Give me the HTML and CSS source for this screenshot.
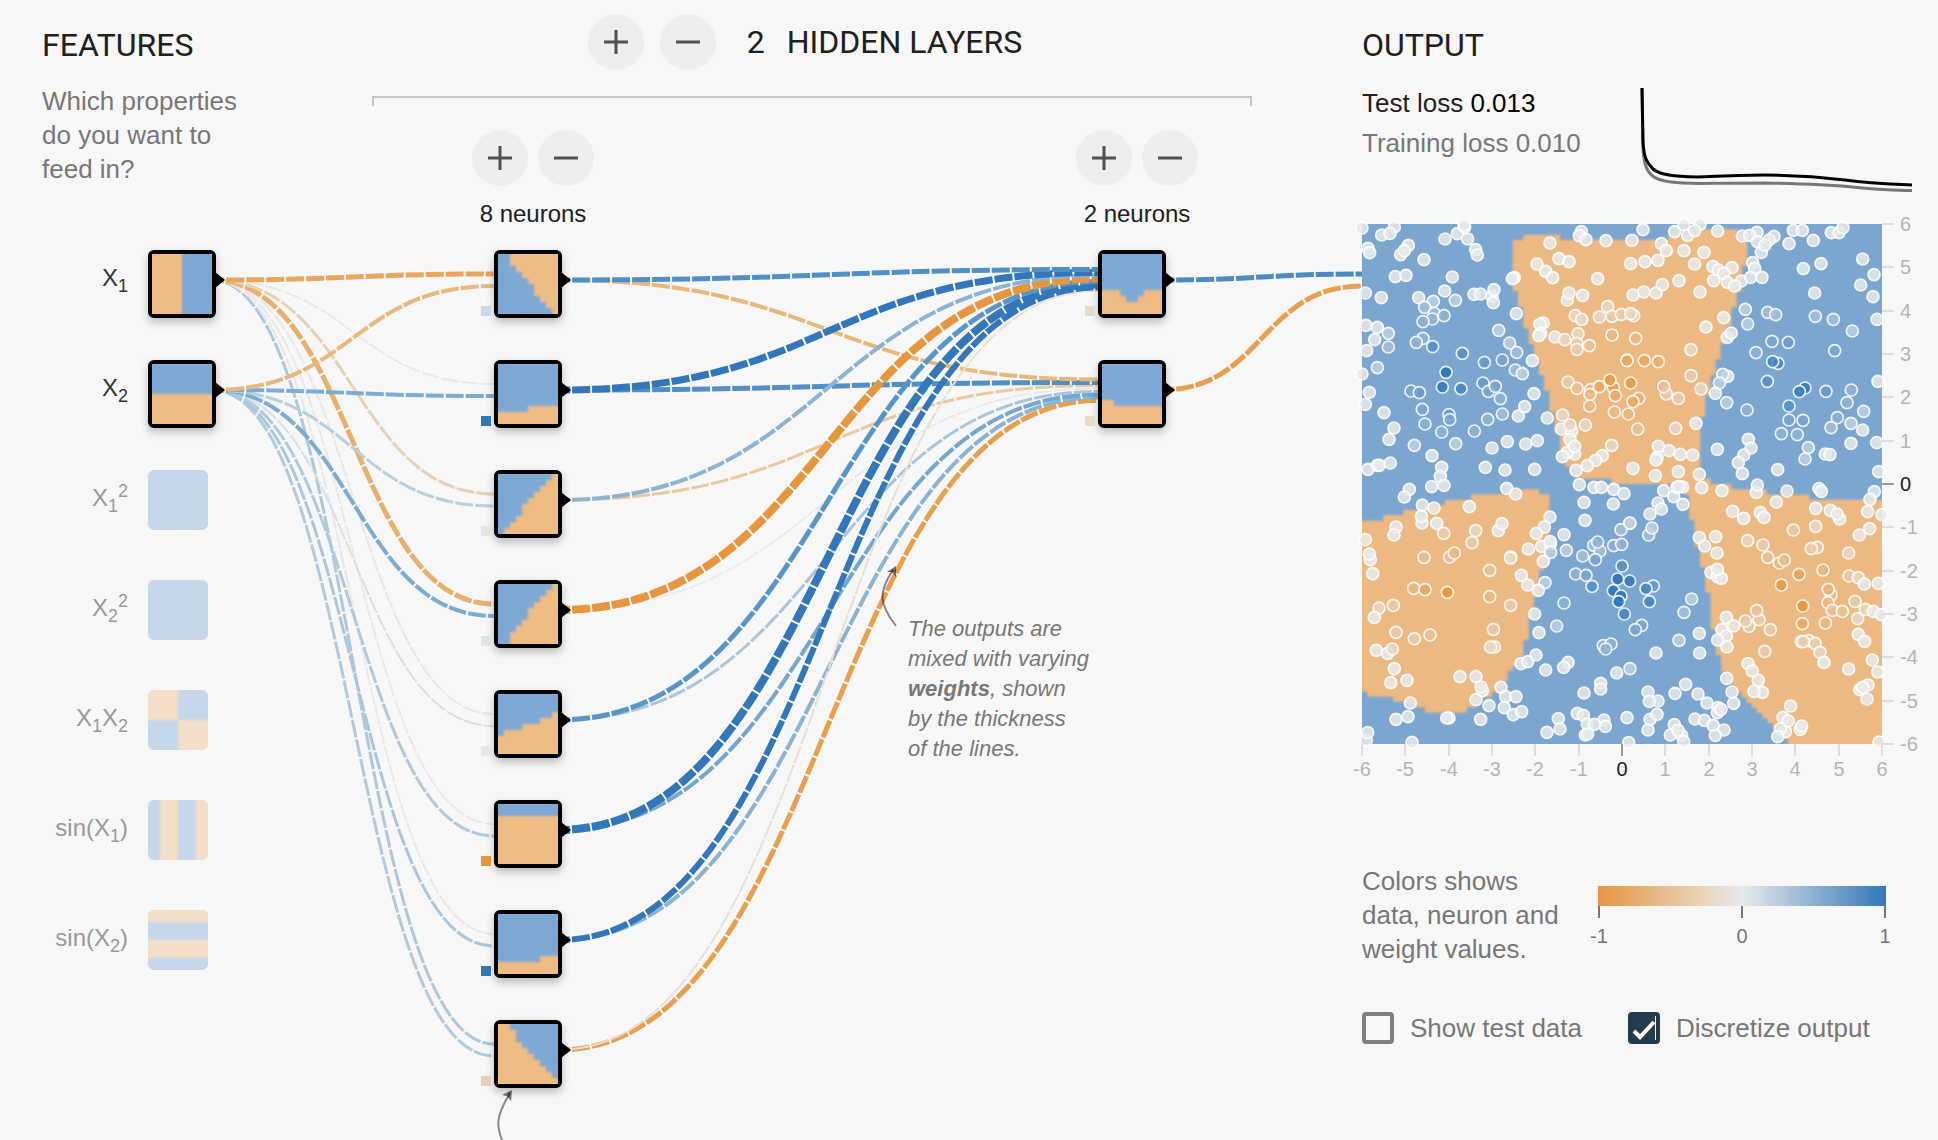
FILE: index.html
```html
<!DOCTYPE html>
<html lang="en">
<head>
<meta charset="utf-8">
<meta name="viewport" content="width=device-width, initial-scale=1">
<title>Neural network playground</title>
<link rel="stylesheet" href="styles.css">
</head>
<body>
<main class="playground">
  <svg class="links" id="links" aria-hidden="true"></svg>

  <section class="features">
    <h2 class="title">FEATURES</h2>
    <p class="copy">Which properties<br>do you want to<br>feed in?</p>
    <ul class="feature-list">
      <li class="feature active"><span class="feature-label">X<sub>1</sub></span><div class="node" id="x1" data-map="x1"></div></li>
      <li class="feature active"><span class="feature-label">X<sub>2</sub></span><div class="node" id="x2" data-map="x2"></div></li>
      <li class="feature"><span class="feature-label">X<sub>1</sub><sup>2</sup></span><div class="swatch" data-map="plain"></div></li>
      <li class="feature"><span class="feature-label">X<sub>2</sub><sup>2</sup></span><div class="swatch" data-map="plain"></div></li>
      <li class="feature"><span class="feature-label">X<sub>1</sub>X<sub>2</sub></span><div class="swatch" data-map="product"></div></li>
      <li class="feature"><span class="feature-label">sin(X<sub>1</sub>)</span><div class="swatch" data-map="sin1"></div></li>
      <li class="feature"><span class="feature-label">sin(X<sub>2</sub>)</span><div class="swatch" data-map="sin2"></div></li>
    </ul>
  </section>

  <section class="network">
    <header class="network-head">
      <div class="head-buttons">
        <button class="round" type="button" aria-label="Add layer"><svg viewBox="0 0 24 24"><path d="M12 0v24M0 12h24"/></svg></button>
        <button class="round" type="button" aria-label="Remove layer"><svg viewBox="0 0 24 24"><path d="M0 12h24"/></svg></button>
      </div>
      <span class="title count">2</span>
      <h2 class="title">HIDDEN LAYERS</h2>
    </header>
    <div class="bracket"></div>
    <div class="layers">
      <div class="layer">
        <div class="layer-buttons">
          <button class="round" type="button" aria-label="Add neuron"><svg viewBox="0 0 24 24"><path d="M12 0v24M0 12h24"/></svg></button>
          <button class="round" type="button" aria-label="Remove neuron"><svg viewBox="0 0 24 24"><path d="M0 12h24"/></svg></button>
        </div>
        <p class="layer-label">8 neurons</p>
        <div class="nodes">
          <div class="node" id="n1" data-map="n1"><i class="bias" style="background:#cbd9e5"></i></div>
          <div class="node" id="n2" data-map="n2"><i class="bias" style="background:#3277ba"></i></div>
          <div class="node" id="n3" data-map="n3"><i class="bias" style="background:#e8e5df"></i></div>
          <div class="node" id="n4" data-map="n4"><i class="bias" style="background:#dce4e8"></i></div>
          <div class="node" id="n5" data-map="n5"><i class="bias" style="background:#e4e8ea"></i></div>
          <div class="node" id="n6" data-map="n6"><i class="bias" style="background:#e8963e"></i></div>
          <div class="node" id="n7" data-map="n7"><i class="bias" style="background:#3277ba"></i></div>
          <div class="node" id="n8" data-map="n8"><i class="bias" style="background:#e8cfb2"></i></div>
        </div>
      </div>
      <div class="layer">
        <div class="layer-buttons">
          <button class="round" type="button" aria-label="Add neuron"><svg viewBox="0 0 24 24"><path d="M12 0v24M0 12h24"/></svg></button>
          <button class="round" type="button" aria-label="Remove neuron"><svg viewBox="0 0 24 24"><path d="M0 12h24"/></svg></button>
        </div>
        <p class="layer-label">2 neurons</p>
        <div class="nodes">
          <div class="node" id="m1" data-map="m1"><i class="bias" style="background:#e8dac8"></i></div>
          <div class="node" id="m2" data-map="m2"><i class="bias" style="background:#e8dac4"></i></div>
        </div>
      </div>
    </div>
    <p class="callout" id="callout">The outputs are<br>mixed with varying<br><b>weights</b>, shown<br>by the thickness<br>of the lines.</p>
  </section>

  <section class="output">
    <h2 class="title">OUTPUT</h2>
    <div class="metrics">
      <div class="losses">
        <p class="loss">Test loss <span class="loss-value">0.013</span></p>
        <p class="loss training">Training loss <span>0.010</span></p>
      </div>
      <svg class="linechart" viewBox="0 0 272 108" role="img" aria-label="Loss over time">
        <path stroke="#777" d="M2 0L3 60C4 78 7 84 14 89C22 94 36 95 60 95.500C90 95 110 95 125 95C170 96 190 97 212 99C240 102 250 102 272 102.500"/>
        <path stroke="#000" d="M2 0L3 54C4 70 7 75 13 81C20 87 34 88.500 57 89C85 88 105 87 125 87C160 87 185 89.500 205 92C235 96 250 96 272 97"/>
      </svg>
    </div>
    <svg class="heatmap" id="heatmap" viewBox="0 0 550 560" role="img" aria-label="Network output"></svg>
    <div class="legend">
      <p class="copy">Colors shows<br>data, neuron and<br>weight values.</p>
      <div class="scale">
        <div class="gradient"></div>
        <div class="scale-ticks">
          <span class="scale-tick">-1</span><span class="scale-tick">0</span><span class="scale-tick">1</span>
        </div>
      </div>
    </div>
    <div class="options">
      <label class="option"><span class="check"><input type="checkbox"></span>Show test data</label>
      <label class="option"><span class="check"><input type="checkbox" checked><svg viewBox="0 0 32 32"><path d="M6 19l6 6L26 10" stroke-width="4"/><path d="M27.500 4v24" stroke-width="1"/></svg></span>Discretize output</label>
    </div>
  </section>
</main>
<script src="script.js"></script>
</body>
</html>
```
FILE: styles.css
```css
* { box-sizing: border-box; }

body {
  margin: 0;
  background: #f7f7f7;
  color: #777;
  font-family: "Liberation Sans", Arial, Helvetica, sans-serif;
  font-size: 26px;
  line-height: 34px;
}

h2, p, ul { margin: 0; padding: 0; }

.playground {
  position: relative;
  display: grid;
  grid-template-columns: 372px minmax(600px, 1fr) 576px;
  min-height: 100vh;
  overflow: hidden;
}

.links {
  position: absolute;
  inset: 0;
  width: 100%;
  height: 100%;
  pointer-events: none;
  fill: none;
}

.title {
  color: #202020;
  font-family: Roboto, sans-serif;
  font-size: 32px;
  font-weight: 400;
  line-height: 40px;
}

/* Features */
.features { padding: 25px 0 0 42px; }
.features .copy { margin-top: 19px; }

.feature-list {
  display: grid;
  gap: 42px;
  margin-top: 64px;
  list-style: none;
}

.feature {
  display: grid;
  grid-template-columns: 86px 68px;
  gap: 20px;
  height: 68px;
}

.feature-label {
  color: #999;
  font-size: 24px;
  line-height: 56px;
  text-align: right;
  white-space: nowrap;
}

.feature.active .feature-label { color: #333; }

.feature-label sub, .feature-label sup {
  font-size: 18px;
  line-height: 0;
}

.swatch {
  width: 60px;
  height: 60px;
  border-radius: 6px;
  overflow: hidden;
  opacity: .4;
}

.node {
  position: relative;
  width: 68px;
  height: 68px;
  border: 4px solid #000;
  border-radius: 6px;
  background: #000;
  box-shadow: 0 4px 8px rgba(0, 0, 0, .25);
}

.node svg, .swatch svg { display: block; width: 60px; height: 60px; }

.node::after {
  content: "";
  position: absolute;
  left: 63px;
  top: 18px;
  border: 8px solid transparent;
  border-left: 10px solid #000;
  border-right: 0;
}

.bias {
  position: absolute;
  left: -17px;
  top: 52px;
  width: 10px;
  height: 10px;
}

/* Hidden layers */
.network {
  position: relative;
  margin-right: 110px;
  padding-top: 14px;
}

.network-head {
  display: flex;
  align-items: center;
  justify-content: center;
  padding-right: 14px;
}

.head-buttons { display: flex; gap: 16px; margin-right: 31px; }
.count { margin-right: 22px; }

.round {
  display: grid;
  place-items: center;
  width: 56px;
  height: 56px;
  padding: 0;
  border: 0;
  border-radius: 50%;
  background: #eee;
}

.round svg {
  width: 24px;
  height: 24px;
  fill: none;
  stroke: #505050;
  stroke-width: 3;
}

.bracket {
  height: 10px;
  margin-top: 26px;
  border: 2px solid #c6c6c6;
  border-bottom: 0;
}

.layers {
  display: flex;
  justify-content: space-between;
  margin-top: 24px;
  padding: 0 54px 0 100px;
}

.layer { width: 122px; }
.layer-buttons { display: flex; justify-content: space-between; }

.layer-label {
  margin-top: 14px;
  color: #202020;
  font-size: 24px;
  line-height: 28px;
  text-align: center;
}

.nodes {
  display: grid;
  gap: 42px;
  margin: 22px 0 0 22px;
}

.callout {
  position: absolute;
  left: 536px;
  top: 614px;
  font-size: 22px;
  font-style: italic;
  line-height: 30px;
  white-space: nowrap;
}

/* Output */
.output { padding: 25px 26px 0 0; position: relative; }

.metrics {
  display: flex;
  justify-content: space-between;
  margin-top: 18px;
}

.loss { color: #202020; line-height: 40px; white-space: nowrap; }
.loss-value { color: #000; }
.loss.training { color: #777; }

.linechart {
  width: 272px;
  height: 108px;
  margin-top: 5px;
  fill: none;
  stroke-width: 3;
}

.heatmap {
  display: block;
  width: 100%;
  margin-top: 28px;
  overflow: visible;
}

.heatmap text {
  fill: #b4b4b4;
  font-size: 20px;
}

.heatmap .tick { stroke: #ddd; stroke-width: 2; }
.heatmap .tick.zero { stroke: #999; }
.heatmap text.zero { fill: #222; }

.legend {
  display: grid;
  grid-template-columns: 236px 288px;
  margin-top: 80px;
}

.legend .copy { white-space: nowrap; }
.scale { padding-top: 22px; }

.gradient {
  height: 20px;
  background: linear-gradient(90deg, #e8963e, #e8eaeb 50%, #3277ba);
}

.scale-ticks {
  display: flex;
  justify-content: space-between;
  margin: 0 -19px;
}

.scale-tick {
  width: 40px;
  font-size: 20px;
  line-height: 24px;
  text-align: center;
}

.scale-tick::before {
  content: "";
  display: block;
  width: 2px;
  height: 12px;
  margin: 0 auto 6px;
  background: #777;
}

.options {
  display: flex;
  gap: 46px;
  margin-top: 46px;
}

.option {
  display: flex;
  align-items: center;
  gap: 16px;
  line-height: 32px;
  white-space: nowrap;
}

.check { display: grid; width: 32px; height: 32px; }
.check > * { grid-area: 1 / 1; }

.check input {
  appearance: none;
  width: 32px;
  height: 32px;
  margin: 0;
  border: 4px solid #7f7f7f;
  border-radius: 4px;
}

.check input:checked { border-color: #233b4b; background: #233b4b; }

.check svg {
  width: 32px;
  height: 32px;
  fill: none;
  stroke: #fff;
  pointer-events: none;
}
```
FILE: script.js
```js
const NS = 'http://www.w3.org/2000/svg';
const BLUE = '#7da9d4';
const ORANGE = '#efbc84';

function el(name, attrs, parent, text) {
  const node = document.createElementNS(NS, name);
  for (const key in attrs) node.setAttribute(key, attrs[key]);
  if (text !== undefined) node.textContent = text;
  if (parent) parent.appendChild(node);
  return node;
}

// Neuron thumbnails: a 10 x 10 grid. Each profile holds the edge of the orange area, one entry per row or column.
const right = rows => rows.map((b, i) => [b, i, 11 - b, 1]);
const left = rows => rows.map((b, i) => [-1, i, b + 1, 1]);
const below = cols => cols.map((b, i) => [i, b, 1, 11 - b]);
const MAPS = {
  x1: left([5, 5, 5, 5, 5, 5, 5, 5, 5, 5]),
  x2: below([5, 5, 5, 5, 5, 5, 5, 5, 5, 5]),
  plain: [],
  product: [[-1, -1, 6, 6], [5, 5, 6, 6]],
  sin1: [[2, -1, 3, 12], [8, -1, 3, 12]],
  sin2: [[-1, -1, 12, 3], [-1, 5, 12, 3]],
  n1: right([2, 2, 3, 4, 5, 6, 6, 7, 8, 9]),
  n2: below([8, 8, 8, 8, 8, 7, 7, 7, 7, 7]),
  n3: right([9, 8, 7, 6, 5, 4, 4, 3, 2, 1]),
  n4: right([9, 8, 7, 6, 5, 5, 4, 3, 2, 2]),
  n5: below([7, 6, 6, 6, 5, 5, 5, 4, 4, 3]),
  n6: below([2, 2, 2, 2, 2, 2, 2, 2, 2, 2]),
  n7: below([8, 8, 8, 8, 8, 8, 8, 7, 7, 7]),
  n8: left([2, 3, 3, 4, 5, 6, 7, 8, 9, 10]),
  m1: below([6, 6, 6, 7, 8, 8, 7, 6, 6, 6]),
  m2: below([6, 6, 7, 7, 7, 7, 7, 7, 7, 7])
};

document.querySelectorAll('[data-map]').forEach((host, n) => {
  const key = host.dataset.map;
  const svg = el('svg', { viewBox: '0 0 60 60' });
  const filter = el('filter', { id: 'soft' + n, filterUnits: 'userSpaceOnUse', x: -12, y: -12, width: 84, height: 84 }, svg);
  el('feGaussianBlur', { stdDeviation: 1 }, filter);
  el('rect', { width: 60, height: 60, fill: BLUE }, svg);
  const group = el('g', { fill: ORANGE, filter: `url(#soft${n})`, 'shape-rendering': 'crispEdges' }, svg);
  let cells = MAPS[key];
  // Repeat the outermost entries past the frame, so that the soft edge stays outside.
  if (cells.length === 10) {
    const across = key === 'x1' || ['n1', 'n3', 'n4', 'n8'].includes(key);
    const first = cells[0].slice(), last = cells[9].slice();
    first[across ? 1 : 0] = -1;
    last[across ? 1 : 0] = 10;
    cells = [first, ...cells, last];
  }
  cells.forEach(([x, y, w, h]) => el('rect', { x: x * 6, y: y * 6, width: w * 6, height: h * 6 }, group));
  host.prepend(svg);
});

// Links: source, target, colour, width.
const LINKS = [
  ['x1', 'n1', '#e8a75c', 5], ['x2', 'n1', '#e8b87e', 4],
  ['x1', 'n2', '#e8e8e8', 2], ['x2', 'n2', '#7dacd2', 4],
  ['x1', 'n3', '#e8d0b4', 3], ['x2', 'n3', '#b8cfe0', 3],
  ['x1', 'n4', '#e8b06c', 5], ['x2', 'n4', '#7dacd3', 4],
  ['x1', 'n5', '#e8e7e5', 2], ['x2', 'n5', '#d5dfe7', 2],
  ['x1', 'n6', '#e8e8e8', 2], ['x2', 'n6', '#b0cadd', 3],
  ['x1', 'n7', '#e8e8e7', 2], ['x2', 'n7', '#a9c6df', 3],
  ['x1', 'n8', '#adc8de', 3], ['x2', 'n8', '#b0cade', 3],
  ['n1', 'm1', '#4f90c6', 5], ['n2', 'm1', '#3277ba', 7],
  ['n3', 'm1', '#8ab3d4', 4], ['n4', 'm1', '#e8963e', 8],
  ['n5', 'm1', '#5896c8', 5], ['n6', 'm1', '#3277ba', 8],
  ['n7', 'm1', '#3277ba', 6], ['n8', 'm1', '#e8dfd3', 2],
  ['n1', 'm2', '#e8b87a', 4], ['n2', 'm2', '#5090c6', 5],
  ['n3', 'm2', '#e8caa0', 3], ['n4', 'm2', '#eaeaea', 2],
  ['n5', 'm2', '#a9c5de', 3], ['n6', 'm2', '#74a7d0', 4],
  ['n7', 'm2', '#8ab3d4', 4], ['n8', 'm2', '#e8a04e', 5],
  ['m1', 'out', '#4a8bc2', 5], ['m2', 'out', '#e8a04e', 5]
];

function drawLinks() {
  const svg = document.getElementById('links');
  const base = svg.getBoundingClientRect();
  const box = id => {
    const r = document.getElementById(id).getBoundingClientRect();
    return { x: r.left - base.left, y: r.top - base.top };
  };
  svg.replaceChildren();
  [...LINKS].reverse().forEach(([from, to, stroke, width]) => {
    const s = box(from);
    const siblings = LINKS.filter(l => l[1] === to);
    const index = siblings.findIndex(l => l[0] === from);
    const spread = (index - (siblings.length - 1) / 2) / siblings.length * 24;
    const t = to === 'out' ? { x: box('heatmap').x, y: box('m1').y } : box(to);
    const x0 = s.x + 64, y0 = s.y + 30, y1 = t.y + 30 + spread, mid = (x0 + t.x) / 2;
    el('path', {
      d: `M${x0} ${y0}C${mid} ${y0} ${mid} ${y1} ${t.x} ${y1}`,
      stroke, 'stroke-width': width, 'stroke-dasharray': '18 2', 'stroke-dashoffset': 6
    }, svg);
  });

  // Callout arrows.
  const c = box('callout'), n = box('n8');
  const a = el('g', { transform: `translate(${c.x} ${c.y})`, stroke: '#000', 'stroke-opacity': .45, 'stroke-width': 2 }, svg);
  el('path', { d: 'M-12 12C-29 -10 -30 -22 -15 -44' }, a);
  el('path', { d: 'M-12 -48L-21 -42L-16 -42L-12 -37Z', fill: '#000', 'fill-opacity': .55, stroke: 'none' }, a);
  const b = el('g', { transform: `translate(${n.x} ${n.y})`, stroke: '#000', 'stroke-opacity': .45, 'stroke-width': 2 }, svg);
  el('path', { d: 'M16 73C2 96 0 106 13 131' }, b);
  el('path', { d: 'M18 70L8 75L13 76L17 81Z', fill: '#000', 'fill-opacity': .55, stroke: 'none' }, b);
}
drawLinks();
window.addEventListener('resize', drawLinks);

// Output heatmap, 1560 sub-units across its 520 units.
const plot = document.getElementById('heatmap');
const defs = el('defs', {}, plot);
el('rect', { width: 1560, height: 1560 }, el('clipPath', { id: 'plot-clip' }, defs));
el('feGaussianBlur', { stdDeviation: 3 }, el('filter', { id: 'plot-soft' }, defs));
const field = el('g', { transform: 'scale(.33333)' }, plot);
const area = el('g', { 'clip-path': 'url(#plot-clip)' }, field);
el('rect', { width: 1560, height: 1560, fill: '#7ba6d0' }, area);
const regions = el('g', { fill: '#edb982', filter: 'url(#plot-soft)' }, area);
el('path', { d: 'M452 48H484V32H594V48H919V32H994V16H1126V32H1156V126H1140V203H1124V250H1108V308H1092V358H1076V406H1061V453H1046V513H1030V578H1015V764H1046V780H1108V796H1214V812H1341V827H1600V1600H1290L1279 1560V1545H1263V1529H1247V1513H1232V1497H1216V1482H1201V1467H1185V1452H1169V1437H1154V1421H1139V1405H1123V1390H1108V1374H1092V1343H1077V1293H1061V1216H1046V1106H1030V1030H1014V968H998V888H982V812H966V796H935V780H749V764H640V748H624V728H609V712H594V623H578V563H562V500H546V453H531V408H516V360H500V313H484V250H468V200H452Z' }, regions);
el('path', { d: 'M-40 890H64V873H124V858H184V843H249V828H327V811H434V796H531V811H562V1020H546V1038H531V1118H516V1183H500V1248H484V1298H468V1325H453V1340H437V1373H421V1388H406V1404H390V1420H359V1436H340V1450H314V1466H189V1450H156V1433H94V1418H16V1403H-40Z' }, regions);

// Data points by quadrant: x, y and the value on a scale of -9 to 9.
const QUADRANTS = [
  [-66, -42, '66,54 163,51 125,75 150,70 84,115 89,128 182,134 205,106 193,122 252,149 166,200 198,196 315,87 352,71 374,51 372,45 383,87 407,119 412,135 337,201 76,249 124,263 236,263 280,274,1 254,292,2 314,243 346,271,1 402,253 422,252 456,259 462,239 460,278 283,310,2 312,317,3 277,327,3 249,335,3 249,385,3 229,397,3 278,410,6 145,370,1 145,411,2 78,346 112,352 104,389 80,422 112,473,1 66,492 88,547 76,583 132,608 367,430,6 433,457,5 487,450,4 476,361,1 509,399,1 530,427,2 526,480,2 547,491,1 577,452 582,551 318,487,9 307,531,8 363,536,7 213,543,4 238,548,5 429,519,5 445,544,4 466,529,4 481,566,3 247,598,4 255,642,3 327,614,5 329,629,4 305,666,3 443,628,3 487,612,2 403,663,3 347,701,1 223,706,1 162,654 147,688 276,737 456,714 502,695 557,702 592,692 535,618 554,590 622,624 436,772 495,780 584,778 84,778 112,766 118,766 151,759 305,772 301,799 529,311 630,99 591,162 617,184 638,203 657,146 687,155 724,65 718,77 738,89 798,92 773,206 523,203 517,206 682,270 687,249 728,256 803,290,-1 706,317,-1 725,328,-1 778,321,-1 816,319,-2 844,313,-2 610,339 600,343 602,370 597,377 645,381 674,389,-1 714,371,-1 710,400,-2 711,418,-2 748,407,-3 816,375,-4 861,450,-8 684,516,-2 711,535,-3 752,539,-4 750,553,-4 778,530,-6 820,533,-7 810,510,-8 826,557,-6 749,588,-4 823,606,-4 865,612,-4 668,615,-1 664,657 695,663 690,645,-1 736,645,-1 690,688 704,732 682,727 704,709 667,740 815,706,-1 787,737 767,751 742,767 708,781'],
  [804, -42, '39,59 6,91 134,65 161,44 173,76 210,43 194,62 263,63 337,78 381,67 359,76 382,95 432,79 417,90 394,127 405,105 94,101 109,122 162,122 222,127 2,161 45,155 84,151 194,162 249,170 265,180 306,173 281,190 251,212 292,217 334,213 314,228 368,158 374,175 362,202 396,202 97,224 147,212 78,249 41,246 9,255 210,246 490,61 517,61 477,101 550,91 604,68 627,68 639,53 573,161 520,176 698,147 732,194 692,225 729,260 741,328 554,249 346,298,1 413,307,2 437,314,2 353,342,1 556,319,2 610,328,2 667,363,1 614,422,4 281,323 228,351 292,382 304,369 11,317,-2 2,311,-1 17,385,-4 183,419,-1 -9,452,-6 43,452,-6 85,455,-5 2,519,-8 183,497,-2 213,537,-1 109,552,-2 101,530,-3 145,565,-2 26,565,-5 9,575,-6 23,657,-3 137,655,-1 198,640 426,394,4 475,397,5 378,428,3 444,460,7 428,455,7 412,514,6 293,499 278,493,1 268,519,1 256,550 290,578,1 351,600,3 525,534,8 508,545,8 588,544,5 664,540,3 651,578,3 744,514 477,588,6 477,630,4 519,631,4 502,674,3 454,671,3 622,623,3 603,653,2 663,640,1 701,604,1 698,660 663,700 740,698 746,785 535,713,1 525,747,1 586,732 600,734 355,688 363,714 341,735 325,758 337,791 262,718 443,779 85,709 117,722 151,733 188,735 81,743 78,750 145,785 76,797 208,793 9,775'],
  [-66, 768, '208,28 193,51 275,20 312,16 247,75 282,84 246,129 244,109 388,80 500,25 527,42 168,141 162,165 76,179 91,239 88,222 98,281 290,130 311,160,-2 407,152,-1 396,188,-2 475,152 486,131 252,232,-3 329,231,-3 343,219,-4 449,271,-3 512,231,-1 512,234,-1 221,325,-4 255,329,-6 322,337,-9 449,350,-4 512,376,-2 160,376,-2 117,384,-1 103,412 168,457,-2 223,476,-2 270,465,-3 460,448,-2 463,501,-1 452,501,-1 109,511 143,520 157,507,-1 163,566 152,608 201,601 360,590 408,590 427,632 423,621 408,659 211,669 168,718 204,710 327,714 320,714 422,718 447,677 483,622 497,650 528,650 493,683 520,704 545,695 79,780 83,758 216,787 630,111 613,141 589,160 565,207 605,199 631,192 631,185 632,217,1 610,244 544,286 563,315 615,308,1 595,331 584,402 597,458 588,525 543,551 563,545 617,570 672,164 679,211,1 672,369,3 650,438,1 684,547 671,562 718,14 762,22 784,22 821,28 852,41 820,72 732,67 735,121 869,130,1 843,149,2 761,196,2 780,213,2 773,186,3 728,228,2 766,239,4 821,197,3 845,193,3 707,282,3 738,286,4 756,319,6 846,258,6 833,297,9 869,303,8 820,332,9 843,348,9 836,365,9 853,402,7 790,497,3 813,492,3 797,507,3 830,579 870,566,1 782,610 782,627 732,639 712,700 730,706 742,732 792,720 796,739 763,733 736,765 743,762 655,716 660,747 621,757 861,713 866,788'],
  [804, 768, '101,32 131,50 158,21 141,22 147,20 159,73 84,69 94,87 60,102 0,129,1 56,165,2 66,144,1 215,23 276,32 379,37 382,15 471,33 567,26 574,34 733,35 720,58 439,66 308,94 341,115 391,98 402,112 557,85 601,91 629,117 621,102 713,95 756,104 719,146 688,165 490,150,-2 557,139,-1 353,182,-1 399,195,-2 208,173 224,198 257,170 261,219 656,219,-1 562,202,-2 544,206,-2 413,232,-3 448,249,-4 463,240,-4 507,283,-7 579,270,-4 657,288,-2 685,293,-1 703,312 745,310 454,315,-8 243,277 262,290 274,295 262,268 603,345,-4 595,328,-5 594,368,-4 675,364,-2 518,378,-9 70,318,5 48,326,7 58,365,7 185,357,1 162,397,2 35,436,4 16,449,4 289,412 387,419,-2 380,392,-3 357,439,-2 346,423,-2 311,438 276,449 289,468 263,480 291,501 421,449,-2 404,514,-2 517,431,-6 586,429,-4 607,391,-3 637,394,-3 683,416,-1 706,388,-1 730,394 754,404 685,463 704,484 536,482,-2 514,485,-2 555,490,-2 520,485,-2 570,517,-1 582,547 656,567 727,540 743,576 147,481,1 208,460 78,519 209,519 354,551 367,573 385,601 397,637 372,634 290,595 306,636 311,670 167,613 135,640 204,642 54,636 84,663 58,664 60,718 81,703 54,750 231,669 264,683 262,698 273,688 195,717 223,721 249,736 282,750 256,766 133,734 121,765 155,767 144,751 161,785 482,678 459,712 475,723 466,755 451,747 443,770 511,748 515,738 690,629 714,615 698,622 711,657 747,786']
];
const NEUTRAL = [232, 234, 235], NEGATIVE = [232, 146, 52], POSITIVE = [38, 112, 184];
function valueColor(v) {
  const end = v < 0 ? NEGATIVE : POSITIVE, k = Math.pow(Math.abs(v) / 9, .7);
  return `rgb(${NEUTRAL.map((c, i) => Math.round(c + (end[i] - c) * k)).join(',')})`;
}
QUADRANTS.forEach(([dx, dy, data]) => {
  const group = el('g', { transform: `translate(${dx} ${dy})`, stroke: '#fff', 'stroke-width': 5, 'stroke-opacity': .85, 'fill-opacity': .85 }, field);
  data.split(' ').forEach(item => {
    const [x, y, v = 0] = item.split(',').map(Number);
    el('circle', { cx: x, cy: y, r: 18, fill: valueColor(v) }, group);
  });
});

// Axes.
for (let v = -6; v <= 6; v++) {
  const at = Math.round((v + 6) * 520 / 12), zero = v === 0 ? ' zero' : '';
  el('path', { class: 'tick' + zero, d: `M${at} 520v12` }, plot);
  el('text', { class: zero.trim(), x: at, y: 552, 'text-anchor': 'middle' }, plot, v);
  el('path', { class: 'tick' + zero, d: `M520 ${520 - at}h12` }, plot);
  el('text', { class: zero.trim(), x: 538, y: 527 - at }, plot, v);
}
```
